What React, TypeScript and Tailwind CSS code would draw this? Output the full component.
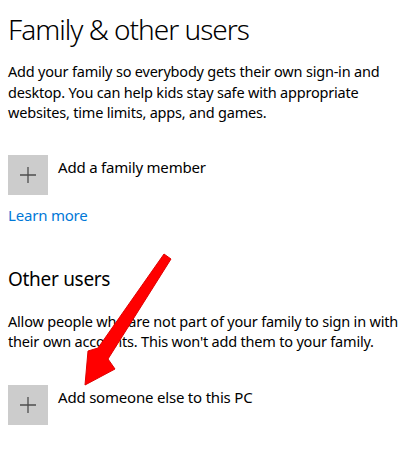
import React from 'react';

function PlusTile() {
  return (
    <div className="w-10 h-10 bg-[#cccccc] flex items-center justify-center shrink-0">
      <svg width="18" height="18" viewBox="0 0 18 18">
        <path d="M9 1v16M1 9h16" stroke="#4d4d4d" strokeWidth="1.3" />
      </svg>
    </div>
  );
}

function AddRow({ label }: { label: string }) {
  return (
    <div className="flex items-start gap-[10px]">
      <PlusTile />
      <span className="text-[15px] leading-5 tracking-[-0.2px] text-black mt-[2px]">{label}</span>
    </div>
  );
}

export default function App() {
  return (
    <div
      className="relative w-[420px] h-[453px] bg-white overflow-hidden px-2 pt-[10px] text-black"
      style={{ fontFamily: '"Noto Sans", "Open Sans", sans-serif' }}
    >
      <h1 className="text-[28px] leading-[38px] font-light tracking-[-1px]">Family &amp; other users</h1>

      <p className="mt-[13px] text-[14.5px] leading-[20.5px] tracking-[-0.2px] w-[400px]">
        Add your family so everybody gets their own sign-in and desktop. You can help kids stay safe with
        appropriate websites, time limits, apps, and games.
      </p>

      <div className="mt-[32px]">
        <AddRow label="Add a family member" />
      </div>

      <a className="block mt-[10px] text-[15px] leading-5 tracking-[-0.2px] text-[#0078d7]">Learn more</a>

      <h2 className="mt-[40px] text-[19px] leading-7 font-normal tracking-[-0.3px]">Other users</h2>

      <p className="mt-[18px] text-[14.5px] leading-5 tracking-[-0.2px] w-[404px]">
        Allow people who are not part of your family to sign in with their own accounts. This won't add
        them to your family.
      </p>

      <div className="mt-[34px]">
        <AddRow label="Add someone else to this PC" />
      </div>

      {/* annotation arrow */}
      <svg className="absolute left-0 top-0 pointer-events-none" width="420" height="453" viewBox="0 0 420 453">
        <polygon
          points="164,254 171,259 108,359 115,369 85,385 88,351 98,348"
          fill="#ff0000"
          stroke="#e00000"
          strokeWidth="1"
          strokeLinejoin="round"
        />
      </svg>
    </div>
  );
}
